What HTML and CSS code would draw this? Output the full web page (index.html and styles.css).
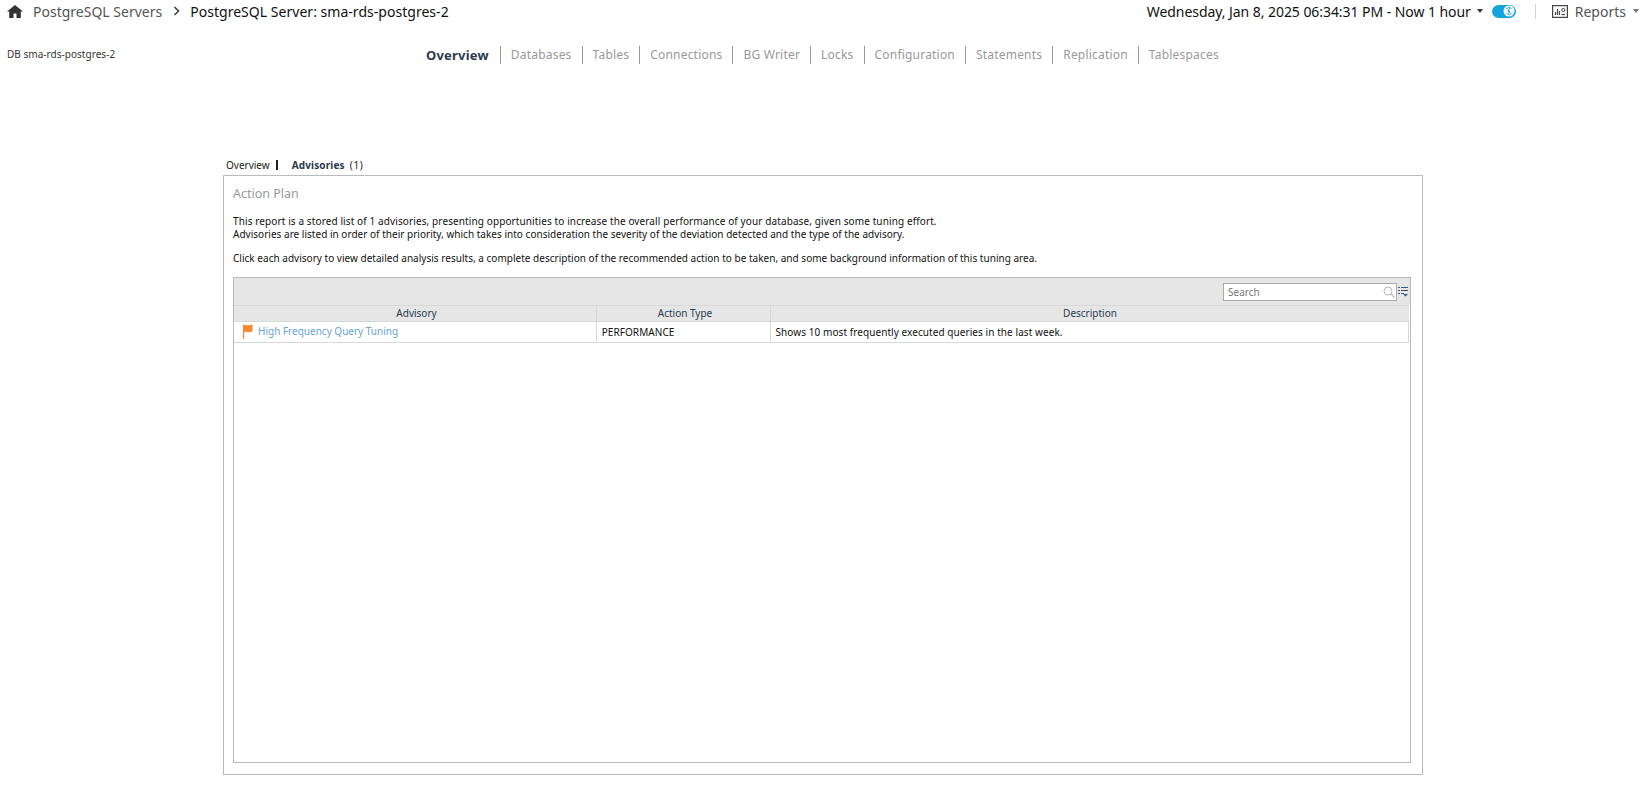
FILE: index.html
```html
<!DOCTYPE html>
<html lang="en">
<head>
<meta charset="utf-8">
<title>PostgreSQL Server: sma-rds-postgres-2</title>
<link rel="stylesheet" href="styles.css">
</head>
<body>
<header class="topbar">
  <nav class="crumbs">
    <svg class="home" viewBox="0 0 16 13" width="16" height="13"><path d="M8 0 0 6.5h2.2V13h4.300V8.500h3V13h4.300V6.5H16z" fill="#333"/></svg>
    <span class="crumb-link">PostgreSQL Servers</span>
    <svg class="chev" viewBox="0 0 8 10" width="8" height="10"><path d="M1.5 1 5.5 5 1.5 9" fill="none" stroke="#444" stroke-width="1.6"/></svg>
    <span class="crumb-current">PostgreSQL Server: sma-rds-postgres-2</span>
  </nav>
  <div class="top-right">
    <span class="time">Wednesday, Jan 8, 2025 06:34:31 PM - Now 1 hour</span>
    <span class="caret dark"></span>
    <span class="toggle"><svg class="toggle-knob" viewBox="0 0 12 12" width="12" height="12"><circle cx="6" cy="6" r="5.5" fill="#fff"/><path d="M8.6 3.6A3.6 3.6 0 0 0 3 4.5M3.4 8.4A3.6 3.6 0 0 0 9 7.5M6.5 3.5 5 6.5h2L5.5 8.5" fill="none" stroke="#1aa3d9" stroke-width="1"/></svg></span>
    <span class="vsep"></span>
    <svg class="report-icon" viewBox="0 0 16 13" width="16" height="13"><rect x=".6" y=".6" width="14.8" height="11.8" fill="none" stroke="#444" stroke-width="1.2"/><path d="M3.5 10V7M5.5 10V4M7.5 10V6" stroke="#444" stroke-width="1.2"/><circle cx="11.3" cy="5" r="1.6" fill="none" stroke="#444"/><path d="M9.5 9.5h3.6" stroke="#444" stroke-width="1.2"/></svg>
    <span class="reports">Reports</span>
    <span class="caret light"></span>
  </div>
</header>

<div class="subbar">
  <div class="db-name">DB sma-rds-postgres-2</div>
  <nav class="main-tabs">
    <a class="main-tab active">Overview</a>
    <a class="main-tab">Databases</a>
    <a class="main-tab">Tables</a>
    <a class="main-tab">Connections</a>
    <a class="main-tab">BG Writer</a>
    <a class="main-tab">Locks</a>
    <a class="main-tab">Configuration</a>
    <a class="main-tab">Statements</a>
    <a class="main-tab">Replication</a>
    <a class="main-tab">Tablespaces</a>
  </nav>
</div>

<main class="content">
  <div class="sub-tabs">
    <span class="sub-tab">Overview</span>
    <span class="sub-sep"></span>
    <span class="sub-tab strong">Advisories</span>
    <span class="sub-count">(1)</span>
  </div>
  <section class="panel">
    <h2 class="panel-title">Action Plan</h2>
    <p class="intro"><span class="wide">This report is a stored list of 1 advisories, presenting opportunities to increase the overall performance of your database, given some tuning effort.</span><br>Advisories are listed in order of their priority, which takes into consideration the severity of the deviation detected and the type of the advisory.</p>
    <p class="intro second">Click each advisory to view detailed analysis results, a complete description of the recommended action to be taken, and some background information of this tuning area.</p>
    <div class="grid">
      <div class="grid-toolbar">
        <div class="search">
          <span class="search-text">Search</span>
          <svg class="search-icon" viewBox="0 0 12 12" width="12" height="12"><circle cx="5" cy="5" r="4" fill="none" stroke="#bbb"/><path d="M8 8l3.5 3.5" stroke="#bbb" stroke-width="1.2"/></svg>
        </div>
        <svg class="columns-icon" viewBox="0 0 10 11" width="10" height="11"><path d="M0 1.5h2M3 1.5h7M0 4.5h2M3 4.5h7M0 7.5h2M3 7.5h3" stroke="#3b5a78"/><path d="M5 8h5L7.500 10.500z" fill="#3b5a78"/></svg>
      </div>
      <div class="grid-row grid-head">
        <div class="cell c1">Advisory</div>
        <div class="cell c2">Action Type</div>
        <div class="cell c3">Description</div>
      </div>
      <div class="grid-row grid-body">
        <div class="cell c1 advisory">
          <svg class="flag" viewBox="0 0 11 15" width="11" height="15"><path d="M1 .5c3 1 5.500 1 9.500 0v7c-3 1-5.500 1-8.300 0V15H1z" fill="#f58a33"/></svg>
          <a class="advisory-link">High Frequency Query Tuning</a>
        </div>
        <div class="cell c2">PERFORMANCE</div>
        <div class="cell c3">Shows 10 most frequently executed queries in the last week.</div>
      </div>
    </div>
  </section>
</main>
</body>
</html>
```
FILE: styles.css
```css
* { box-sizing: border-box; }
html, body { margin: 0; padding: 0; }
body {
  width: 1646px;
  height: 797px;
  overflow: hidden;
  background: #fff;
  font-family: "Noto Sans", "Open Sans", sans-serif;
  color: #111;
}
.topbar {
  display: flex;
  justify-content: space-between;
  align-items: center;
  height: 22px;
  padding: 0 0 0 7px;
}
.crumbs { display: flex; align-items: center; font-size: 14px; }
.home { margin-right: 10px; }
.crumb-link { color: #555; }
.chev { margin: 0 9px 0 11px; }
.crumb-current { color: #111; letter-spacing: .03px; }
.top-right { display: flex; align-items: center; font-size: 14px; padding-right: 7px; }
.time { color: #111; letter-spacing: -.06px; }
.caret { width: 0; height: 0; border-left: 3.5px solid transparent; border-right: 3.5px solid transparent; border-top: 4px solid #333; }
.caret.dark { margin: 0 0 0 6px; }
.caret.light { border-top-color: #777; margin-left: 7px; }
.toggle {
  display: flex; align-items: center; justify-content: flex-end;
  width: 24px; height: 13px; margin-left: 9px; padding-right: 1px;
  border-radius: 7px; background: #12a5dc;
}
.vsep { width: 1px; height: 15px; background: #c8d4dc; margin: 0 16px 0 19px; }
.report-icon { margin-right: 7px; }
.reports { color: #555; }

.subbar { position: relative; height: 134px; }
.db-name { position: absolute; left: 7px; top: 25px; font-size: 10px; color: #333; letter-spacing: .03px; }
.main-tabs { display: flex; align-items: center; padding: 24px 0 0 426px; }
.main-tab {
  font-size: 12px; line-height: 18px; color: #999; letter-spacing: .2px;
  padding: 0 10px; border-left: 1px solid #999;
}
.main-tab:first-child { border-left: 0; padding-left: 0; padding-right: 11px; }
.main-tab.active { color: #2b3a4d; font-weight: 700; font-size: 13px; letter-spacing: .2px; }

.content { margin-left: 223px; width: 1200px; }
.sub-tabs { display: flex; align-items: center; height: 18px; margin-bottom: 1px; padding-left: 3px; font-size: 10px; color: #222; }
.sub-sep { width: 2px; height: 10px; background: #222; margin: 0 14px 0 6px; }
.sub-tab.strong { font-weight: 700; color: #2b3a4d; letter-spacing: .15px; }
.sub-count { margin-left: 5px; letter-spacing: .6px; }

.panel { height: 600px; border: 1px solid #bbb; padding: 9px 11px 12px 9px; }
.panel-title { margin: 0 0 13px; font-size: 12.500px; line-height: 17px; font-weight: 400; color: #999; }
.intro { margin: 0; font-size: 10px; line-height: 13px; color: #111; letter-spacing: .02px; }
.intro .wide { letter-spacing: .11px; }
.intro.second { margin-top: 11px; }
.grid { margin-top: 12px; height: 486px; border: 1px solid #bbb; }
.grid-toolbar {
  display: flex; align-items: center; justify-content: flex-end;
  height: 27px; padding: 0 2px 0 0; background: #e6e6e6;
}
.search {
  display: flex; align-items: center; justify-content: space-between;
  width: 174px; height: 18px; padding: 0 1px 0 4px;
  background: #fff; border: 1px solid #aaa;
}
.search-text { font-size: 10px; color: #777; }
.columns-icon { margin-left: 1px; }
.grid-row { display: flex; }
.cell { font-size: 10px; border-right: 1px solid #d8d8d8; }
.c1 { width: 363px; }
.c2 { width: 174px; }
.c3 { width: 638px; border-right: 0; }
.grid-head { height: 17px; margin-right: 1px; background: #e6e6e6; border-top: 1px solid #d8d8d8; border-bottom: 1px solid #d8d8d8; }
.grid-head .cell { line-height: 15px; text-align: center; color: #2b3a4d; }
.grid-head .c1, .grid-head .c2 { padding-left: 3px; }
.grid-body { height: 21px; margin-right: 1px; border-right: 1px solid #d8d8d8; border-bottom: 1px solid #d8d8d8; }
.grid-body .cell { padding-left: 5px; line-height: 20px; color: #111; letter-spacing: .07px; }
.grid-body .advisory { display: flex; align-items: center; padding-left: 8px; padding-bottom: 2px; }
.flag { margin-right: 5px; }
.advisory-link { color: #6aa3d8; letter-spacing: 0; }
```
